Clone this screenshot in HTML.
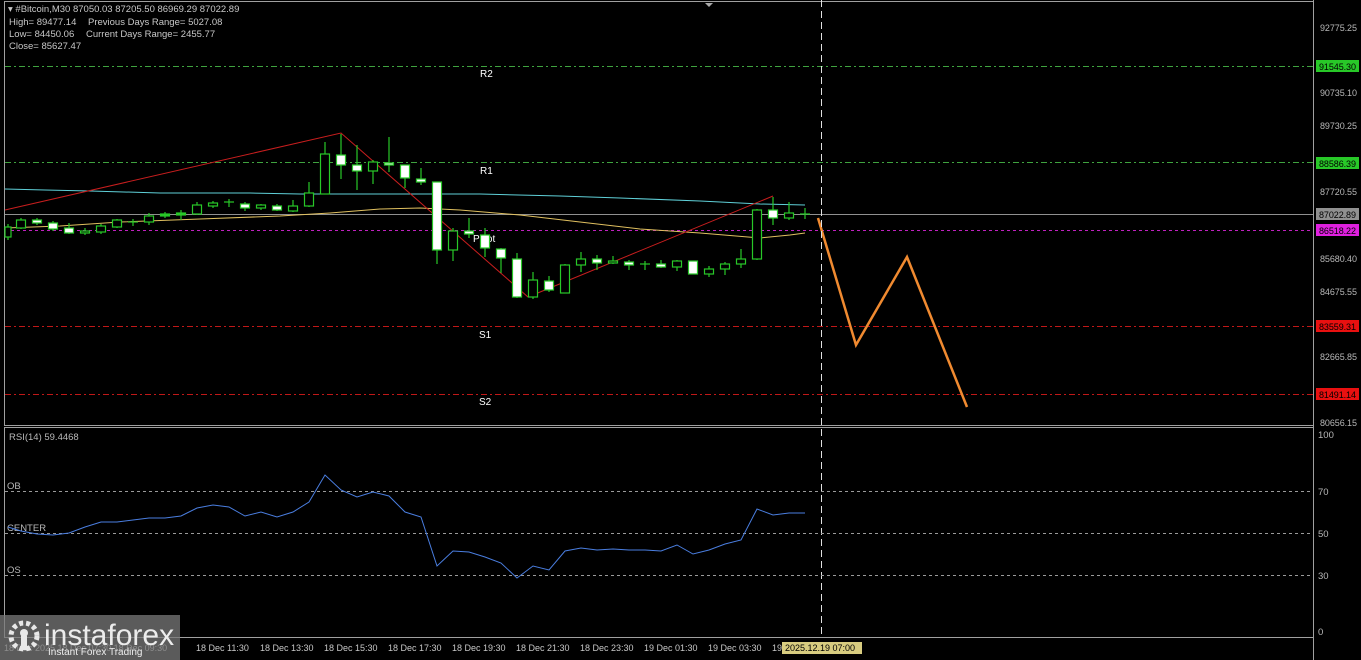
<!DOCTYPE html>
<html><head><meta charset="utf-8"><style>
html,body{margin:0;padding:0;background:#000;}
body{width:1361px;height:660px;overflow:hidden;position:relative;font-family:"Liberation Sans",sans-serif;}
svg{position:absolute;left:0;top:0}
text{font-family:"Liberation Sans",sans-serif;}
</style></head><body>
<svg width="1361" height="660" viewBox="0 0 1361 660" xmlns="http://www.w3.org/2000/svg">
<rect width="1361" height="660" fill="#000"/>
<rect x="4.5" y="1.5" width="1309" height="424" fill="none" stroke="#a0a0a0" stroke-width="1"/>
<rect x="4.5" y="427.5" width="1309" height="210" fill="none" stroke="#a0a0a0" stroke-width="1"/>
<line x1="1313.5" y1="0" x2="1313.5" y2="660" stroke="#a0a0a0"/>
<polygon points="705,3 713,3 709,7" fill="#aaa"/>
<g stroke-width="1" stroke-dasharray="6,3,2,3">
<line x1="5" y1="66.5" x2="1313" y2="66.5" stroke="#3fa33f"/>
<line x1="5" y1="162.5" x2="1313" y2="162.5" stroke="#3fa33f"/>
<line x1="5" y1="326.5" x2="1313" y2="326.5" stroke="#c01818"/>
<line x1="5" y1="394.5" x2="1313" y2="394.5" stroke="#c01818"/>
</g>
<line x1="5" y1="230.5" x2="1313" y2="230.5" stroke="#c020c0" stroke-dasharray="3,3"/>
<line x1="5" y1="214.5" x2="1313" y2="214.5" stroke="#909090"/>
<g fill="#fff" font-size="10">
<text x="480" y="77">R2</text><text x="480" y="174">R1</text>
<text x="473" y="242">Pivot</text>
<text x="479" y="338">S1</text><text x="479" y="405">S2</text>
</g>
<polyline fill="none" stroke="#5fd0d8" stroke-width="1" points="5,189 45,190 90,191 160,193 250,193 300,194 400,194 480,194 560,196 620,198 700,201 760,204 805,205"/>
<polyline fill="none" stroke="#e0c060" stroke-width="1" points="5,228 60,226 120,222 200,219 280,216 330,213 380,209 420,208 460,210 520,215 580,222 640,229 700,233 760,238 790,235 805,233"/>
<polyline fill="none" stroke="#c81e1e" stroke-width="1" points="5,210 341,133 528,297 773,196"/>
<g stroke="#28c828" stroke-width="1.2">
<line x1="8" y1="224" x2="8" y2="240"/><rect x="5" y="227" width="6" height="10" fill="#000"/>
<line x1="21" y1="218" x2="21" y2="229"/><rect x="16.5" y="220" width="9" height="8" fill="#000"/>
<line x1="37" y1="218" x2="37" y2="225"/><rect x="32.5" y="220" width="9" height="3" fill="#fff"/>
<line x1="53" y1="221" x2="53" y2="231"/><rect x="48.5" y="223" width="9" height="6" fill="#fff"/>
<line x1="69" y1="223" x2="69" y2="234"/><rect x="64.5" y="228" width="9" height="5" fill="#fff"/>
<line x1="85" y1="228" x2="85" y2="235"/><rect x="80.5" y="231" width="9" height="2" fill="#000"/>
<line x1="101" y1="224" x2="101" y2="234"/><rect x="96.5" y="226" width="9" height="6" fill="#000"/>
<line x1="117" y1="219" x2="117" y2="228"/><rect x="112.5" y="220" width="9" height="7" fill="#000"/>
<line x1="133" y1="219" x2="133" y2="226"/><line x1="128" y1="222" x2="138" y2="222"/>
<line x1="149" y1="213" x2="149" y2="225"/><rect x="144.5" y="216" width="9" height="6" fill="#000"/>
<line x1="165" y1="212" x2="165" y2="218"/><rect x="160.5" y="214" width="9" height="2" fill="#28c828"/>
<line x1="181" y1="210" x2="181" y2="220"/><rect x="176.5" y="213" width="9" height="2" fill="#28c828"/>
<line x1="197" y1="202" x2="197" y2="215"/><rect x="192.5" y="205" width="9" height="9" fill="#000"/>
<line x1="213" y1="201" x2="213" y2="208"/><rect x="208.5" y="203" width="9" height="3" fill="#000"/>
<line x1="229" y1="199" x2="229" y2="207"/><line x1="224" y1="202" x2="234" y2="202"/>
<line x1="245" y1="202" x2="245" y2="211"/><rect x="240.5" y="204" width="9" height="4" fill="#fff"/>
<line x1="261" y1="204" x2="261" y2="210"/><rect x="256.5" y="205" width="9" height="3" fill="#000"/>
<line x1="277" y1="204" x2="277" y2="211"/><rect x="272.5" y="206" width="9" height="4" fill="#fff"/>
<line x1="293" y1="200" x2="293" y2="212"/><rect x="288.5" y="206" width="9" height="5" fill="#000"/>
<line x1="309" y1="182" x2="309" y2="207"/><rect x="304.5" y="193" width="9" height="13" fill="#000"/>
<line x1="325" y1="142" x2="325" y2="194"/><rect x="320.5" y="154" width="9" height="40" fill="#000"/>
<line x1="341" y1="134" x2="341" y2="179"/><rect x="336.5" y="155" width="9" height="10" fill="#fff"/>
<line x1="357" y1="145" x2="357" y2="190"/><rect x="352.5" y="165" width="9" height="6" fill="#fff"/>
<line x1="373" y1="160" x2="373" y2="184"/><rect x="368.5" y="162" width="9" height="9" fill="#000"/>
<line x1="389" y1="137" x2="389" y2="172"/><rect x="384.5" y="163" width="9" height="2" fill="#fff"/>
<line x1="405" y1="165" x2="405" y2="188"/><rect x="400.5" y="165" width="9" height="13" fill="#fff"/>
<line x1="421" y1="168" x2="421" y2="185"/><rect x="416.5" y="179" width="9" height="3" fill="#fff"/>
<line x1="437" y1="182" x2="437" y2="264"/><rect x="432.5" y="182" width="9" height="68" fill="#fff"/>
<line x1="453" y1="228" x2="453" y2="261"/><rect x="448.5" y="231" width="9" height="19" fill="#000"/>
<line x1="469" y1="218" x2="469" y2="238"/><rect x="464.5" y="231" width="9" height="3" fill="#fff"/>
<line x1="485" y1="228" x2="485" y2="257"/><rect x="480.5" y="235" width="9" height="13" fill="#fff"/>
<line x1="501" y1="248" x2="501" y2="273"/><rect x="496.5" y="249" width="9" height="9" fill="#fff"/>
<line x1="517" y1="253" x2="517" y2="298"/><rect x="512.5" y="259" width="9" height="38" fill="#fff"/>
<line x1="533" y1="272" x2="533" y2="299"/><rect x="528.5" y="280" width="9" height="17" fill="#000"/>
<line x1="549" y1="276" x2="549" y2="292"/><rect x="544.5" y="281" width="9" height="9" fill="#fff"/>
<line x1="565" y1="264" x2="565" y2="293"/><rect x="560.5" y="265" width="9" height="28" fill="#000"/>
<line x1="581" y1="252" x2="581" y2="272"/><rect x="576.5" y="259" width="9" height="6" fill="#000"/>
<line x1="597" y1="255" x2="597" y2="270"/><rect x="592.5" y="259" width="9" height="4" fill="#fff"/>
<line x1="613" y1="256" x2="613" y2="264"/><rect x="608.5" y="261" width="9" height="2" fill="#000"/>
<line x1="629" y1="260" x2="629" y2="270"/><rect x="624.5" y="262" width="9" height="3" fill="#fff"/>
<line x1="645" y1="261" x2="645" y2="270"/><line x1="640" y1="264" x2="650" y2="264"/>
<line x1="661" y1="260" x2="661" y2="268"/><rect x="656.5" y="264" width="9" height="3" fill="#fff"/>
<line x1="677" y1="260" x2="677" y2="271"/><rect x="672.5" y="261" width="9" height="6" fill="#000"/>
<line x1="693" y1="261" x2="693" y2="274"/><rect x="688.5" y="261" width="9" height="13" fill="#fff"/>
<line x1="709" y1="266" x2="709" y2="277"/><rect x="704.5" y="269" width="9" height="5" fill="#000"/>
<line x1="725" y1="262" x2="725" y2="275"/><rect x="720.5" y="264" width="9" height="5" fill="#000"/>
<line x1="741" y1="249" x2="741" y2="268"/><rect x="736.5" y="259" width="9" height="5" fill="#000"/>
<line x1="757" y1="209" x2="757" y2="260"/><rect x="752.5" y="210" width="9" height="49" fill="#000"/>
<line x1="773" y1="197" x2="773" y2="225"/><rect x="768.5" y="210" width="9" height="8" fill="#fff"/>
<line x1="789" y1="202" x2="789" y2="220"/><rect x="784.5" y="213" width="9" height="5" fill="#000"/>
<line x1="805" y1="208" x2="805" y2="219"/><line x1="800" y1="214" x2="810" y2="214"/>
</g>
<polyline fill="none" stroke="#f08a30" stroke-width="2.5" points="818,218 856,345 907,257 967,407"/>
<line x1="821.5" y1="0" x2="821.5" y2="638" stroke="#e0e0e0" stroke-dasharray="7,4"/>
<g fill="#b8b8b8" font-size="9">
<text x="1320" y="31" textLength="37">92775.25</text>
<text x="1320" y="96" textLength="37">90735.10</text>
<text x="1320" y="129" textLength="37">89730.25</text>
<text x="1320" y="195" textLength="37">87720.55</text>
<text x="1320" y="262" textLength="37">85680.40</text>
<text x="1320" y="295" textLength="37">84675.55</text>
<text x="1320" y="360" textLength="37">82665.85</text>
<text x="1320" y="426" textLength="37">80656.15</text>
</g>
<g font-size="9" fill="#000">
<rect x="1316" y="60" width="43" height="12" fill="#28c828"/><text x="1319" y="70" textLength="37">91545.30</text>
<rect x="1316" y="157" width="43" height="12" fill="#28c828"/><text x="1319" y="167" textLength="37">88586.39</text>
<rect x="1316" y="208" width="43" height="12" fill="#909090"/><text x="1319" y="218" textLength="37">87022.89</text>
<rect x="1316" y="224" width="43" height="12" fill="#e020e0"/><text x="1319" y="234" textLength="37">86518.22</text>
<rect x="1316" y="320" width="43" height="12" fill="#e81010"/><text x="1319" y="330" textLength="37">83559.31</text>
<rect x="1316" y="388" width="43" height="12" fill="#e81010"/><text x="1319" y="398" textLength="37">81491.14</text>
</g>
<g fill="#c8c8c8" font-size="9.5">
<text x="8" y="12">▾ #Bitcoin,M30  87050.03 87205.50 86969.29 87022.89</text>
<text x="9" y="25">High= 89477.14</text><text x="88" y="25">Previous Days Range= 5027.08</text>
<text x="9" y="37">Low= 84450.06</text><text x="86" y="37">Current Days Range= 2455.77</text>
<text x="9" y="49">Close= 85627.47</text>
</g>
<g stroke="#9a9a9a" stroke-dasharray="3,3">
<line x1="5" y1="491.5" x2="1313" y2="491.5"/>
<line x1="5" y1="533.5" x2="1313" y2="533.5"/>
<line x1="5" y1="575.5" x2="1313" y2="575.5"/>
</g>
<g fill="#b8b8b8" font-size="9.5">
<text x="9" y="440">RSI(14) 59.4468</text>
<text x="7" y="489">OB</text><text x="7" y="531">CENTER</text><text x="7" y="573">OS</text>
<text x="1318" y="438">100</text><text x="1318" y="495">70</text><text x="1318" y="537">50</text><text x="1318" y="579">30</text><text x="1318" y="635">0</text>
</g>
<polyline fill="none" stroke="#4a7ee0" stroke-width="1" points="8,527 21,531 37,534 53,535 69,533 85,527 101,522 117,522 133,520 149,518 165,518 181,516 197,508 213,505 229,507 245,516 261,512 277,517 293,512 309,502 325,475 341,490 357,497 373,492 389,496 405,512 421,517 437,566 453,551 469,552 485,557 501,563 517,578 533,566 549,570 565,551 581,548 597,550 613,549 629,550 645,550 661,551 677,545 693,554 709,550 725,544 741,540 757,509 773,515 789,513 805,513"/>
<g fill="#c8c8c8" font-size="9">
<text x="4" y="651">18 Dec 2025 18 Dec 07:30 18 Dec 09:30</text>
<text x="196" y="651">18 Dec 11:30</text><text x="260" y="651">18 Dec 13:30</text>
<text x="324" y="651">18 Dec 15:30</text><text x="388" y="651">18 Dec 17:30</text>
<text x="452" y="651">18 Dec 19:30</text><text x="516" y="651">18 Dec 21:30</text>
<text x="580" y="651">18 Dec 23:30</text><text x="644" y="651">19 Dec 01:30</text>
<text x="708" y="651">19 Dec 03:30</text><text x="772" y="651">19</text>
</g>
<rect x="782" y="642" width="80" height="12" fill="#d8cc80"/>
<text x="785" y="651" font-size="9" fill="#000">2025.12.19 07:00</text>
<rect x="0" y="615" width="180" height="45" fill="#7a7a7a" fill-opacity="0.75"/>
<g fill="#e8e8e8">
<circle cx="24" cy="636" r="13" fill="none" stroke="#e8e8e8" stroke-width="5" stroke-dasharray="4,3"/>
<circle cx="24" cy="633" r="4"/><rect x="21" y="636" width="6" height="14"/>
</g>
<text x="44" y="645" font-size="30" fill="#ececec">instaforex</text>
<text x="48" y="655" font-size="10" fill="#ececec">Instant Forex Trading</text>
</svg>
</body></html>
